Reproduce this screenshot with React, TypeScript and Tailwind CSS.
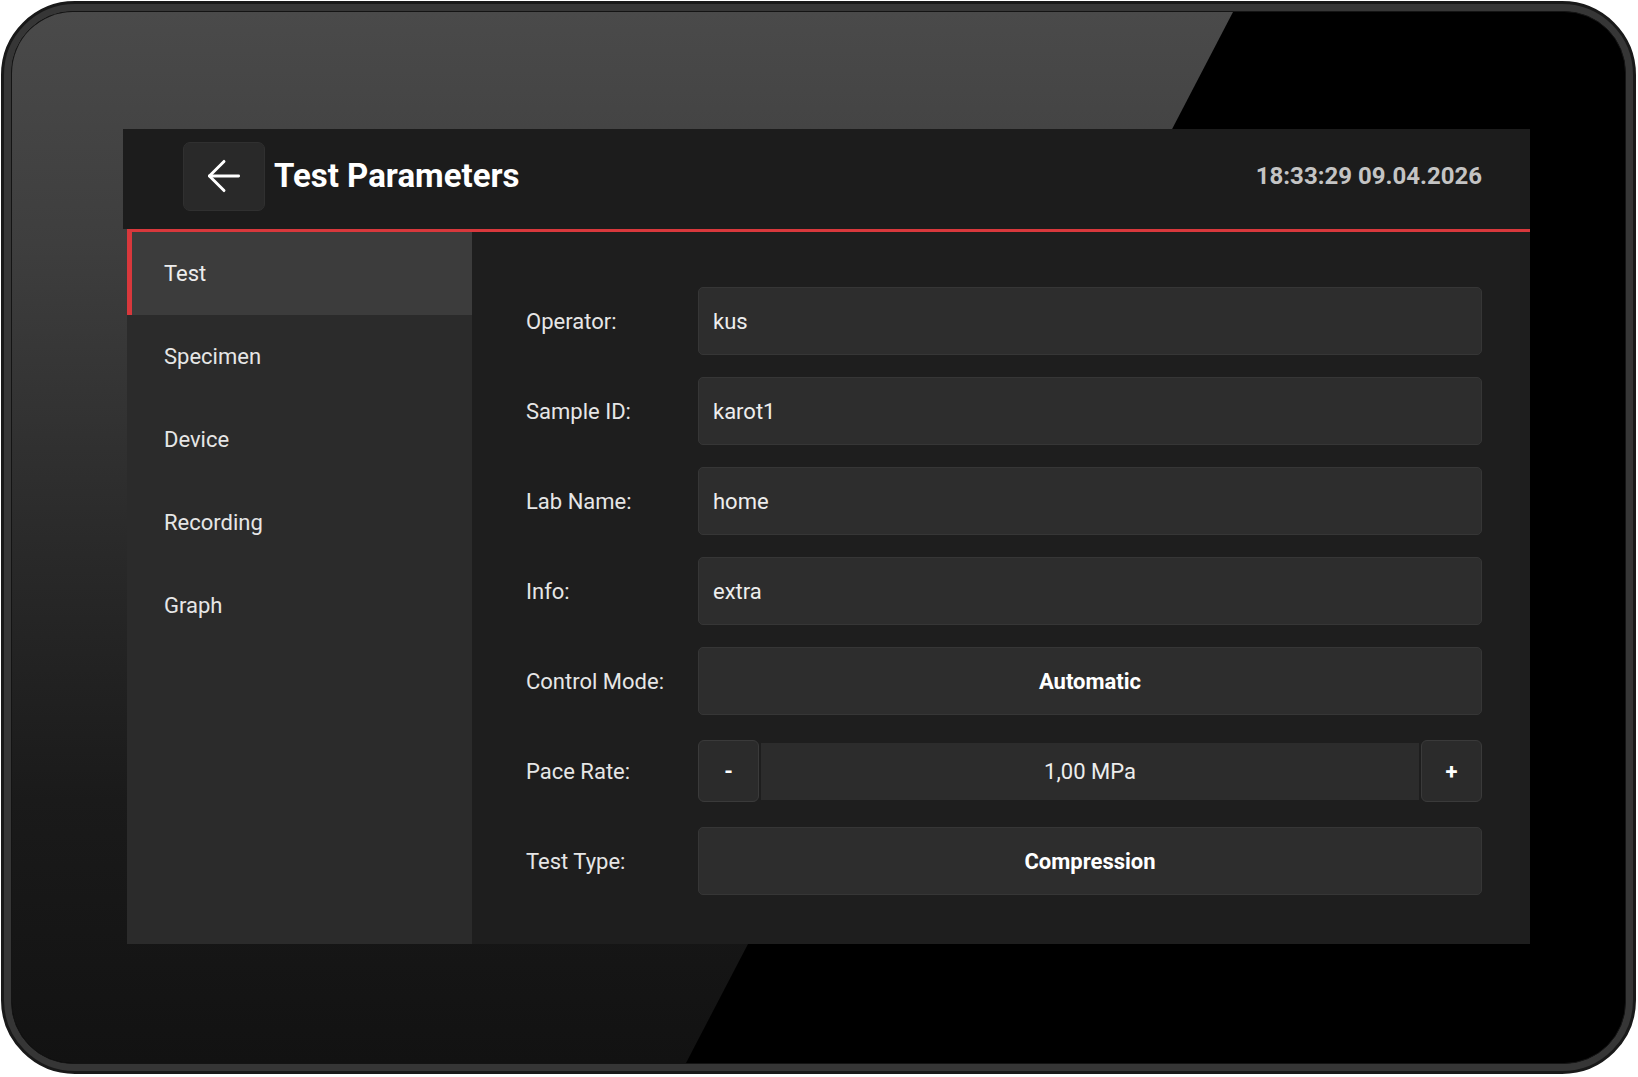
import { ArrowLeft } from 'lucide-react';

const tabs = ['Test', 'Specimen', 'Device', 'Recording', 'Graph'];

const textFields = [
  { label: 'Operator:', value: 'kus' },
  { label: 'Sample ID:', value: 'karot1' },
  { label: 'Lab Name:', value: 'home' },
  { label: 'Info:', value: 'extra' },
];

function Label({ children }: { children: string }) {
  return <div className="flex h-[68px] items-center text-[22px] text-[#e6e6e6]">{children}</div>;
}

export default function App() {
  return (
    <div className="h-[1077px] w-[1638px] bg-white pl-[1px] pt-[1px] font-['Roboto',sans-serif]">
      {/* device bezel */}
      <div className="h-[1073px] w-[1635px] rounded-[74px] border-[3px] border-[#191919] bg-[#363636] p-[7px]">
        <div className="relative h-full overflow-hidden rounded-[62px] border border-[#141414] bg-black pl-[111px] pt-[117px]">
          {/* glass reflection */}
          <div className="absolute inset-0 bg-[linear-gradient(to_bottom,#4a4a4a_0%,#3e3e3e_22%,#2a2a2a_50%,#1a1a1a_75%,#121212_100%)] [clip-path:polygon(0_0,1221px_0,674px_100%,0_100%)]" />

          {/* screen */}
          <div className="relative flex h-[815px] w-[1407px] flex-col">
            {/* header */}
            <div className="flex h-[100px] items-center justify-between bg-[#1c1c1c] pb-[6px] pl-[60px] pr-[48px]">
              <div className="flex items-center gap-[9px]">
                <button className="flex h-[69px] w-[82px] items-center justify-center rounded-[7px] border border-[#303030] bg-[#292929] text-white">
                  <ArrowLeft size={50} strokeWidth={1.4} />
                </button>
                <h1 className="text-[33px] font-bold text-white">Test Parameters</h1>
              </div>
              <div className="text-[24px] font-bold text-[#c4c4c4]">18:33:29 09.04.2026</div>
            </div>

            {/* body */}
            <div className="ml-[4px] flex flex-1 border-t-[3px] border-[#d8383c]">
              <nav className="w-[345px] bg-[#2b2b2b]">
                {tabs.map((tab, i) => (
                  <div
                    key={tab}
                    className={
                      i === 0
                        ? 'flex h-[83px] items-center border-l-[5px] border-[#d8383c] bg-[#3c3c3c] pl-[32px] text-[22px] text-[#ededed]'
                        : 'flex h-[83px] items-center pl-[37px] text-[22px] text-[#e6e6e6]'
                    }
                  >
                    {tab}
                  </div>
                ))}
              </nav>

              <div className="flex-1 bg-[#1e1e1e] pl-[54px] pr-[48px] pt-[55px]">
                <div className="grid grid-cols-[172px_1fr] gap-y-[22px]">
                  {textFields.map((f) => (
                    <div key={f.label} className="contents">
                      <Label>{f.label}</Label>
                      <div className="flex h-[68px] items-center rounded-[5px] border border-[#363636] bg-[#2d2d2d] px-[14px] text-[22px] text-[#ededed]">
                        {f.value}
                      </div>
                    </div>
                  ))}

                  <Label>Control Mode:</Label>
                  <div className="flex h-[68px] items-center justify-center rounded-[5px] border border-[#363636] bg-[#2d2d2d] text-[22px] font-bold text-white">
                    Automatic
                  </div>

                  <Label>Pace Rate:</Label>
                  <div className="flex h-[68px] items-center">
                    <button className="flex h-[62px] w-[61px] items-center justify-center rounded-[6px] border border-[#3a3a3a] bg-[#2b2b2b] text-[22px] font-bold text-white">
                      -
                    </button>
                    <div className="mx-[2px] flex h-[57px] flex-1 items-center justify-center bg-[#2c2c2c] text-[22px] text-[#ededed]">
                      1,00 MPa
                    </div>
                    <button className="flex h-[62px] w-[61px] items-center justify-center rounded-[6px] border border-[#3a3a3a] bg-[#2b2b2b] text-[22px] font-bold text-white">
                      +
                    </button>
                  </div>

                  <Label>Test Type:</Label>
                  <div className="flex h-[68px] items-center justify-center rounded-[5px] border border-[#363636] bg-[#2d2d2d] text-[22px] font-bold text-white">
                    Compression
                  </div>
                </div>
              </div>
            </div>
          </div>
        </div>
      </div>
    </div>
  );
}
